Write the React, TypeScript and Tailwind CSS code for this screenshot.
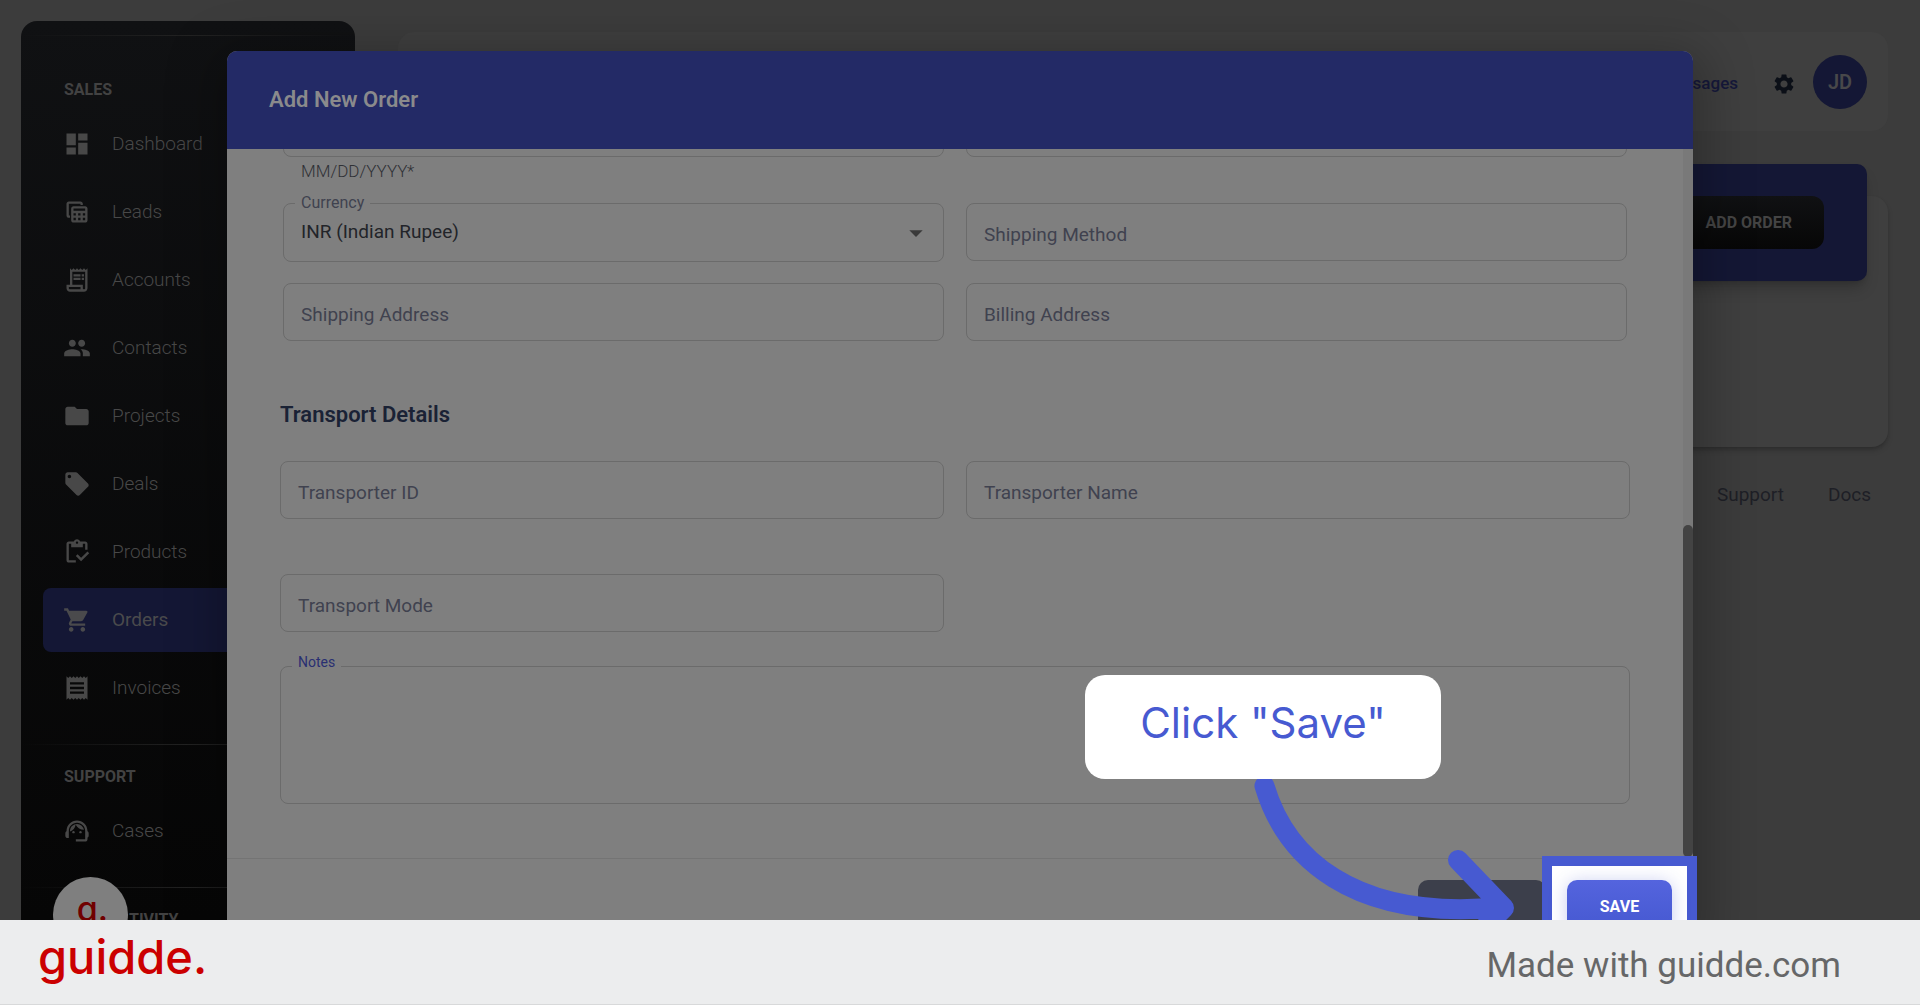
import type { ComponentType } from "react";
import {
  MdArrowDropDown,
  MdDashboard,
  MdFolder,
  MdLocalOffer,
  MdOutlineInventory,
  MdPeople,
  MdOutlineReceiptLong,
  MdReceipt,
  MdSettings,
  MdShoppingCart,
  MdSupportAgent,
  MdTableView,
} from "react-icons/md";

type Item = { label: string; icon: ComponentType<{ className?: string }>; active?: boolean };

const sales: Item[] = [
  { label: "Dashboard", icon: MdDashboard },
  { label: "Leads", icon: MdTableView },
  { label: "Accounts", icon: MdOutlineReceiptLong },
  { label: "Contacts", icon: MdPeople },
  { label: "Projects", icon: MdFolder },
  { label: "Deals", icon: MdLocalOffer },
  { label: "Products", icon: MdOutlineInventory },
  { label: "Orders", icon: MdShoppingCart, active: true },
  { label: "Invoices", icon: MdReceipt },
];

const support: Item[] = [{ label: "Cases", icon: MdSupportAgent }];

function Divider() {
  return <div className="h-px shrink-0 bg-linear-to-r from-transparent via-[#222222] to-transparent" />;
}

function NavHeading({ children }: { children: string }) {
  return <h2 className="px-[43px] pt-5 pb-[10px] text-base leading-6 font-bold text-[#424242]">{children}</h2>;
}

function NavList({ items }: { items: Item[] }) {
  return (
    <ul className="flex flex-col gap-1 px-[22px] pb-6">
      {items.map(({ label, icon: Icon, active }) => (
        <li key={label}>
          <a
            href="#"
            className={
              active
                ? "flex h-16 items-center gap-[21px] rounded-lg bg-[#141735] pl-5 text-[19px] text-[#4a4a4c]"
                : "flex h-16 items-center gap-[21px] rounded-lg pl-5 text-[19px] font-light text-[#484848]"
            }
          >
            <Icon className="size-7" />
            {label}
          </a>
        </li>
      ))}
    </ul>
  );
}

function Sidebar() {
  return (
    <nav className="relative flex w-[334px] shrink-0 flex-col overflow-hidden rounded-t-2xl bg-linear-to-b from-[#101113] to-[#060606] pt-[14px]">
      <Divider />
      <div className="pt-[22px]">
        <NavHeading>SALES</NavHeading>
        <NavList items={sales} />
      </div>
      <Divider />
      <NavHeading>SUPPORT</NavHeading>
      <NavList items={support} />
      <Divider />
      <div className="pl-[65px]">
        <NavHeading>TIVITY</NavHeading>
      </div>
      <button
        type="button"
        aria-label="Guidde"
        className="absolute top-[856px] left-8 size-[75px] rounded-full bg-[#7f7f7f] pb-3 pl-1 font-[Inter] text-[34px] leading-none font-medium text-[#700000]"
      >
        g.
      </button>
    </nav>
  );
}

function MainArea() {
  return (
    <main className="min-w-0 flex-1 pt-[11px] pr-8 pl-[43px]">
      <header className="flex h-[99px] items-center justify-end rounded-2xl bg-[#3f3f3f] pr-[21px]">
        <a href="#" className="mr-[34px] pt-1 text-[17px] font-medium text-[#15183a]">
          Messages
        </a>
        <button type="button" aria-label="Settings" className="mr-[17px] pt-1">
          <MdSettings className="size-6 text-[#0b0f17]" />
        </button>
        <button type="button" className="size-[54px] rounded-full bg-[#141735] text-xl font-semibold text-[#48484a]">
          JD
        </button>
      </header>
      <section className="mt-[65px] h-[251px] rounded-2xl bg-[#3f3f3f] px-[21px] shadow-md shadow-black/20">
        <div className="relative -top-8 flex h-[117px] items-center justify-end rounded-[10px] bg-[#141735] pr-[43px] shadow-lg shadow-black/20">
          <button
            type="button"
            className="h-[53px] rounded-xl bg-linear-to-b from-[#101113] to-[#070707] px-8 text-base font-bold text-[#444444]"
          >
            ADD ORDER
          </button>
        </div>
      </section>
      <footer className="mt-9 flex justify-end gap-11 pr-[17px] text-[19px] leading-6 text-[#1e1f26]">
        <a href="#">Support</a>
        <a href="#">Docs</a>
      </footer>
    </main>
  );
}

function Field({ id, label, className = "" }: { id: string; label: string; className?: string }) {
  return (
    <div className={`relative ${className}`}>
      <input
        id={id}
        className="block h-[58px] w-full rounded-lg border border-[#6b6b6b] bg-transparent px-[18px] text-lg text-[#22252b] outline-none"
      />
      <label htmlFor={id} className="absolute top-5 left-[18px] text-[19px] leading-6 text-[#40424f]">
        {label}
      </label>
    </div>
  );
}

function OrderForm() {
  return (
    <div className="flex min-w-0 flex-1 flex-col justify-end overflow-hidden pb-[54px]">
      <div className="grid grid-cols-2 gap-x-[22px] px-14">
        <div>
          <input
            id="order-date"
            aria-describedby="order-date-help"
            aria-label="Order date"
            className="block h-[58px] w-full rounded-lg border border-[#6b6b6b]"
          />
          <p id="order-date-help" className="h-[46px] pt-[2px] pl-[18px] text-[17px] leading-6 font-light text-[#2f3136]">
            MM/DD/YYYY*
          </p>
        </div>
        <input aria-label="Delivery date" className="block h-[58px] w-full rounded-lg border border-[#6b6b6b]" />

        <div className="relative h-20">
          <select
            id="currency"
            className="block h-[59px] w-full appearance-none rounded-lg border border-[#6b6b6b] bg-transparent px-[17px] text-[19px] text-[#222429] outline-none"
          >
            <option>INR (Indian Rupee)</option>
          </select>
          <label
            htmlFor="currency"
            className="absolute -top-3 left-3 bg-[#7f7f7f] px-[6px] text-base leading-6 text-[#40424f]"
          >
            Currency
          </label>
          <MdArrowDropDown className="pointer-events-none absolute top-[14px] right-3 size-8 text-[#3a3a3a]" />
        </div>
        <Field id="shipping-method" label="Shipping Method" />
        <Field id="shipping-address" label="Shipping Address" />
        <Field id="billing-address" label="Billing Address" />
      </div>

      <div className="grid grid-cols-2 gap-x-[22px] px-[53px] pt-[59px]">
        <h3 className="col-span-2 mb-[31px] text-[22px] leading-[30px] font-semibold text-[#1a2235]">Transport Details</h3>
        <Field id="transporter-id" label="Transporter ID" />
        <Field id="transporter-name" label="Transporter Name" />
        <Field id="transport-mode" label="Transport Mode" className="mt-[55px]" />
        <div className="relative col-span-2 mt-[34px]">
          <textarea
            id="notes"
            className="block h-[138px] w-full resize-none rounded-lg border border-[#6b6b6b] bg-transparent p-4 text-lg outline-none"
          />
          <label htmlFor="notes" className="absolute -top-4 left-3 bg-[#7f7f7f] px-[6px] text-sm leading-6 text-[#292f72]">
            Notes
          </label>
        </div>
      </div>
    </div>
  );
}

function OrderDialog() {
  return (
    <div
      role="dialog"
      aria-label="Add New Order"
      className="relative w-[76.35%] rounded-t-[10px] bg-[#7f7f7f] shadow-[0_12px_50px_12px_rgba(0,0,0,0.25)]"
    >
      <h1 className="flex h-[98px] items-center rounded-t-[10px] bg-[#232a66] px-[42px] pb-[2px] text-[22px] font-semibold text-[#8a8a8c]">
        Add New Order
      </h1>
      <div className="flex h-[709px]">
        <OrderForm />
        <div className="flex w-[10px] shrink-0 flex-col justify-end bg-[#797979] pb-px">
          <div className="h-[332px] rounded-full bg-[#434343]" />
        </div>
      </div>
      <div className="flex justify-end gap-[21px] border-t border-[#747474] px-[21px] pt-[21px]">
        <button type="button" className="h-[53px] w-32 rounded-[10px] bg-[#3c3f4b] text-[15px] font-bold text-[#7f7f7f]">
          CANCEL
        </button>
        <div className="relative">
          <div className="absolute -inset-x-[25px] -top-6 h-[104px] border-[10px] border-[#475ad1] bg-white" />
          <button
            type="button"
            className="relative h-[53px] w-[105px] rounded-[10px] bg-linear-to-b from-[#5464de] to-[#4558d0] text-base font-bold text-white shadow-[0_2px_18px_rgba(70,85,210,0.3)]"
          >
            SAVE
          </button>
        </div>
      </div>

      <div className="absolute top-[624px] right-[252px] flex h-[104px] w-[356px] justify-center rounded-[20px] bg-white pt-5 font-[Inter] text-[42px] leading-[56px] text-[#475ad1]">
        Click "Save"
      </div>
      <svg
        className="pointer-events-none absolute top-[728px] right-[173px] h-[180px] w-[280px]"
        viewBox="1240 779 280 180"
        fill="none"
        stroke="#475ad1"
        strokeWidth="20"
        strokeLinecap="round"
        strokeLinejoin="round"
        aria-hidden="true"
      >
        <path d="M1264.500 786C1285 855 1350 922 1502 907M1458 860L1504 908L1458 954" />
      </svg>
    </div>
  );
}

export default function App() {
  return (
    <div className="flex h-screen flex-col overflow-hidden font-[Roboto,sans-serif]">
      <div className="relative min-h-0 flex-1 overflow-hidden bg-[#3c3c3c]">
        <div className="flex h-full pt-[21px] pl-[21px]">
          <Sidebar />
          <MainArea />
        </div>
        <div className="absolute inset-0 flex items-start justify-center pt-[51px]">
          <OrderDialog />
        </div>
      </div>
      <footer className="relative flex h-[85px] shrink-0 items-center justify-between border-b border-[#d8d9da] bg-[#ecedee] pr-[79px] pl-[38px]">
        <a href="#" className="pb-3 font-[Inter] text-[47px] leading-none font-medium text-[#cb0000]">
          guidde.
        </a>
        <p className="pt-2 text-[35px] leading-10 text-[#666768]">Made with guidde.com</p>
      </footer>
    </div>
  );
}
